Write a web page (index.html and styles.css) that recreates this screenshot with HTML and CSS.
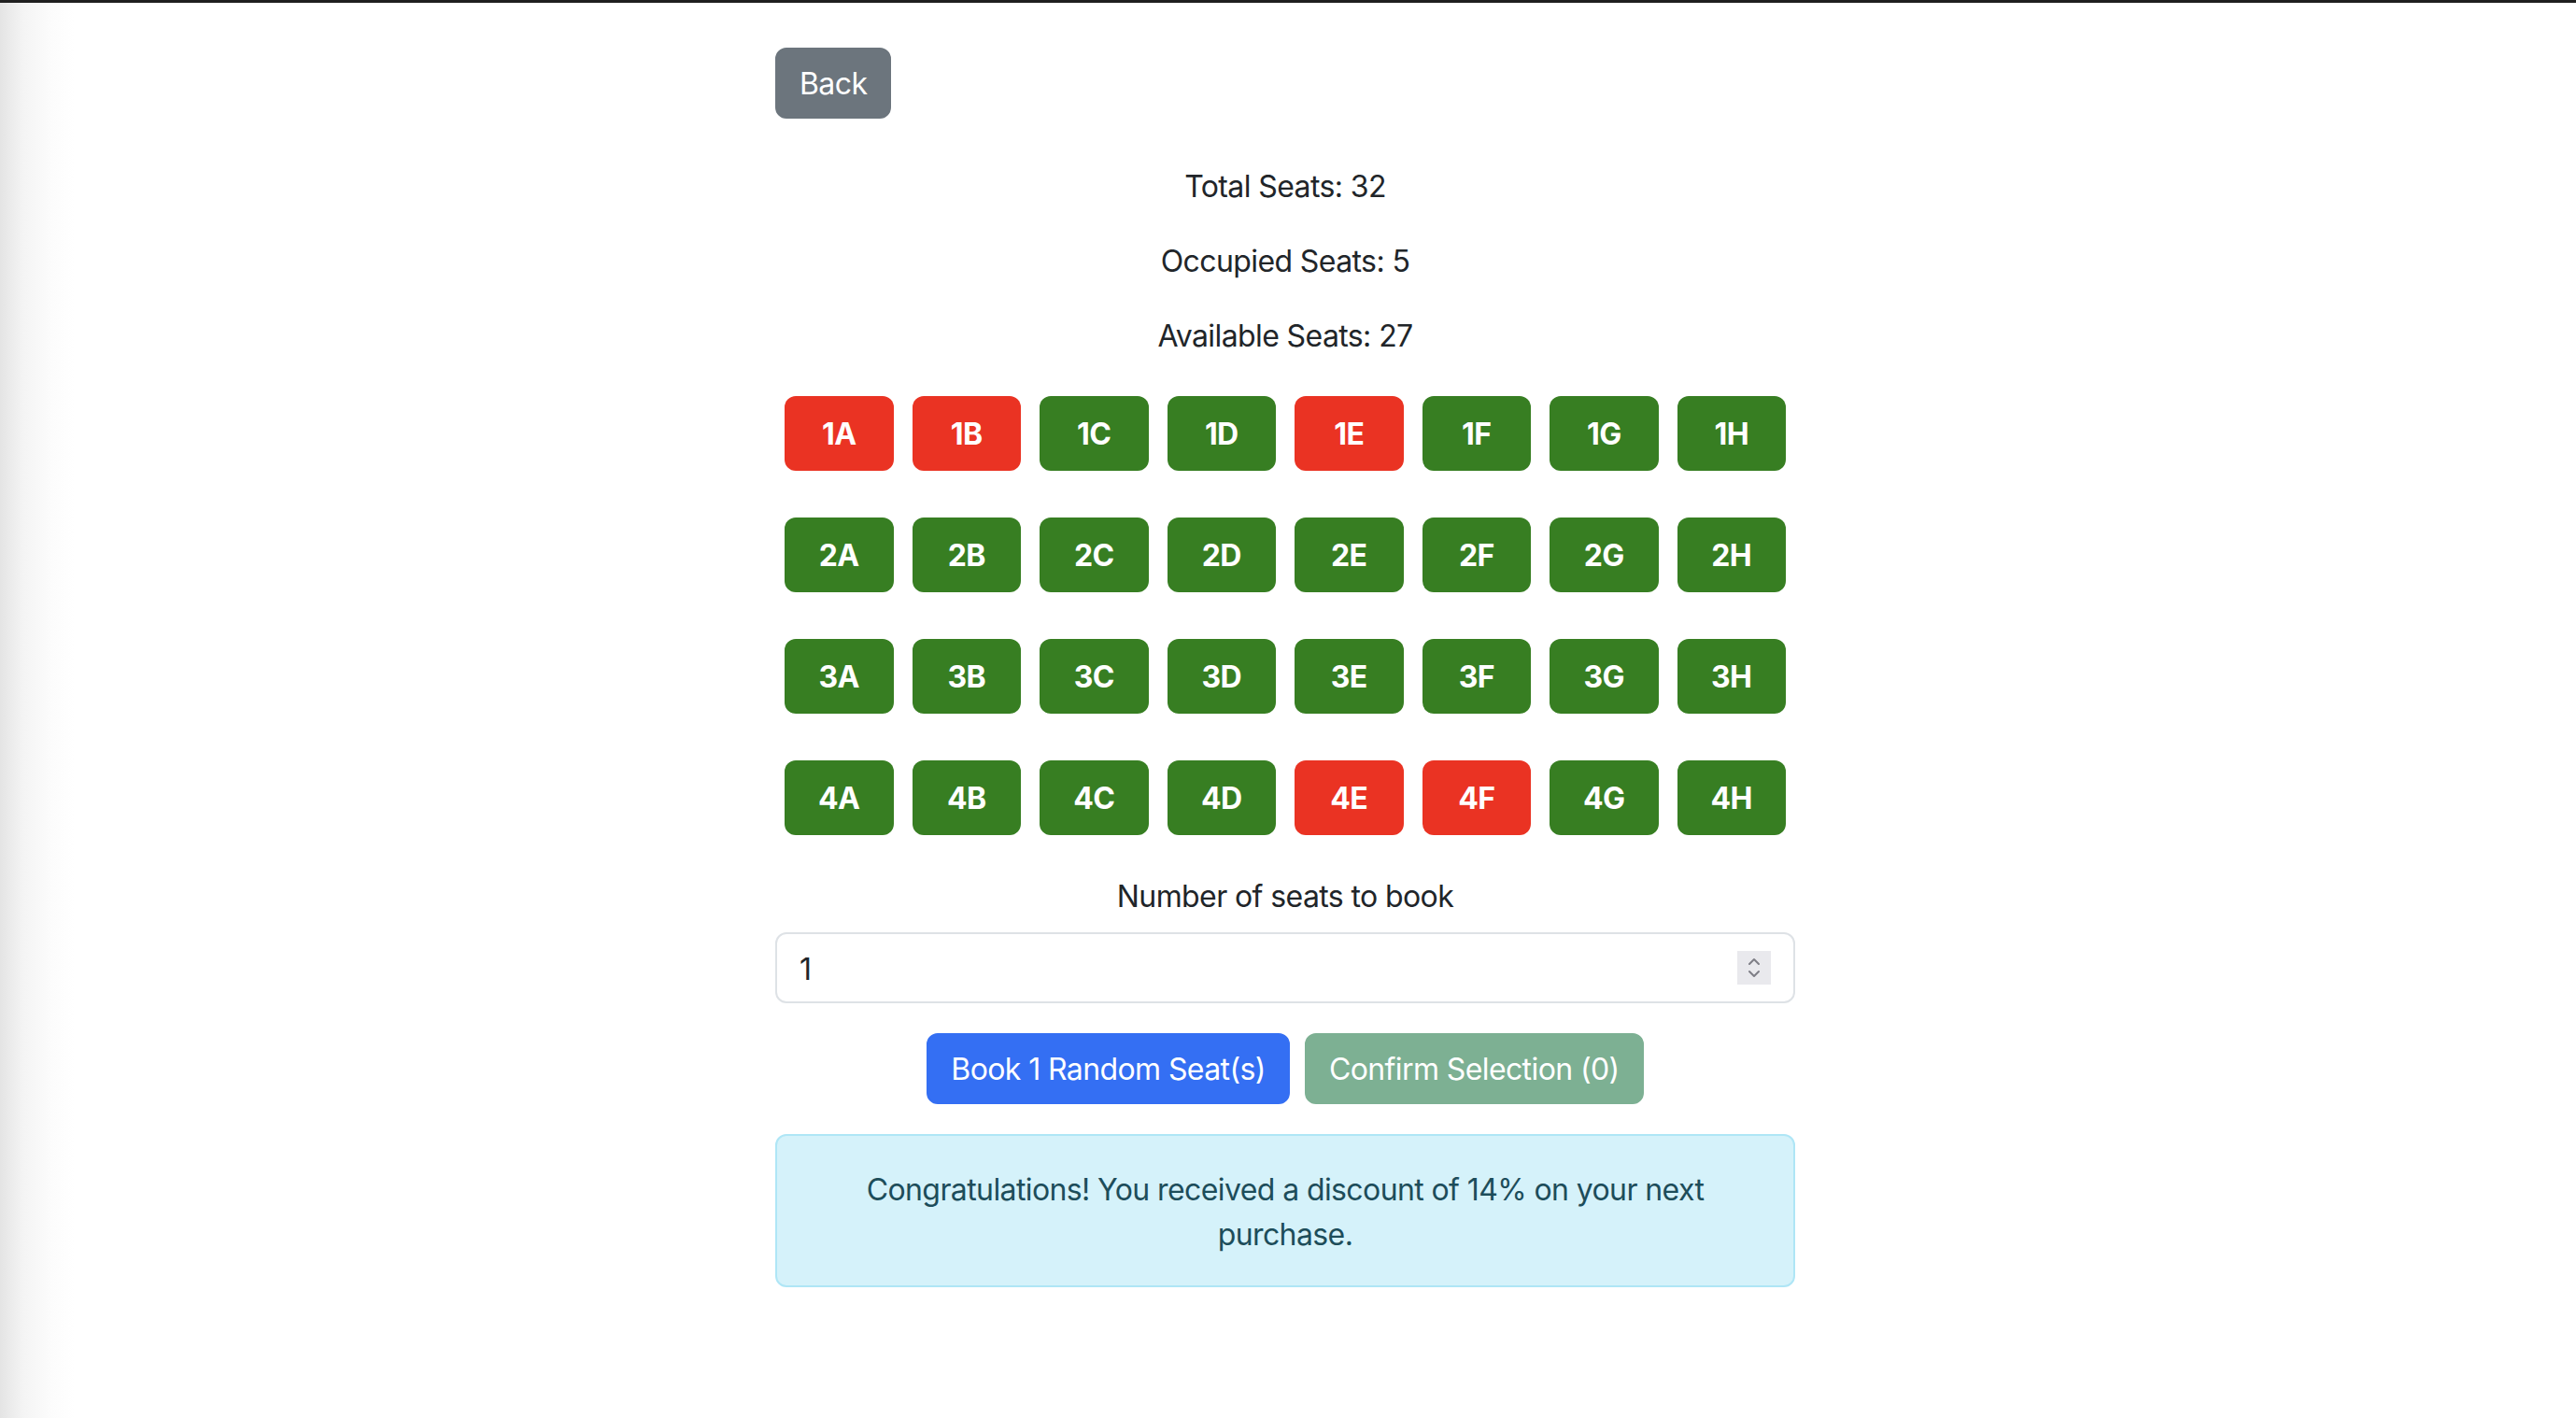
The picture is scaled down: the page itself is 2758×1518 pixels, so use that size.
FILE: index.html
```html
<!DOCTYPE html>
<html lang="en">
<head>
<meta charset="utf-8">
<title>Seat Booking</title>
<link rel="stylesheet" href="styles.css">
</head>
<body>
<div class="topbar"></div>
<main class="page">
  <button class="btn btn-back" type="button">Back</button>
  <section class="stats">
    <p>Total Seats: 32</p>
    <p>Occupied Seats: 5</p>
    <p>Available Seats: 27</p>
  </section>
  <div class="seat-grid">
    <button class="seat occupied">1A</button>
    <button class="seat occupied">1B</button>
    <button class="seat free">1C</button>
    <button class="seat free">1D</button>
    <button class="seat occupied">1E</button>
    <button class="seat free">1F</button>
    <button class="seat free">1G</button>
    <button class="seat free">1H</button>
    <button class="seat free">2A</button>
    <button class="seat free">2B</button>
    <button class="seat free">2C</button>
    <button class="seat free">2D</button>
    <button class="seat free">2E</button>
    <button class="seat free">2F</button>
    <button class="seat free">2G</button>
    <button class="seat free">2H</button>
    <button class="seat free">3A</button>
    <button class="seat free">3B</button>
    <button class="seat free">3C</button>
    <button class="seat free">3D</button>
    <button class="seat free">3E</button>
    <button class="seat free">3F</button>
    <button class="seat free">3G</button>
    <button class="seat free">3H</button>
    <button class="seat free">4A</button>
    <button class="seat free">4B</button>
    <button class="seat free">4C</button>
    <button class="seat free">4D</button>
    <button class="seat occupied">4E</button>
    <button class="seat occupied">4F</button>
    <button class="seat free">4G</button>
    <button class="seat free">4H</button>
  </div>
  <label class="count-label" for="count">Number of seats to book</label>
  <div class="count-field">
    <input id="count" class="count-input" type="text" value="1">
    <span class="spinner" aria-hidden="true">
      <svg width="14" height="24" viewBox="0 0 14 24">
        <path d="M2 8 L7 3 L12 8" fill="none" stroke="#7e7e86" stroke-width="2" stroke-linecap="round" stroke-linejoin="round"/>
        <path d="M2 16 L7 21 L12 16" fill="none" stroke="#7e7e86" stroke-width="2" stroke-linecap="round" stroke-linejoin="round"/>
      </svg>
    </span>
  </div>
  <div class="actions">
    <button class="btn btn-primary" type="button">Book 1 Random Seat(s)</button>
    <button class="btn btn-confirm" type="button" disabled>Confirm Selection (0)</button>
  </div>
  <div class="alert">Congratulations! You received a discount of 14% on your next purchase.</div>
</main>
</body>
</html>
```

FILE: styles.css
```css
* {
  box-sizing: border-box;
}

html, body {
  height: 100%;
}

body {
  margin: 0;
  font-family: Inter, "Liberation Sans", Arial, sans-serif;
  font-size: 32px;
  line-height: 1.5;
  letter-spacing: -0.6px;
  color: #212529;
  background: linear-gradient(to right, #e4e4e4 0, #f4f4f4 25px, #fcfcfc 55px, #ffffff 80px);
}

.topbar {
  height: 3px;
  background: #1f1f1f;
}

.page {
  width: 1092px;
  margin-left: calc(50% - 549px);
  padding-top: 48px;
}

.btn {
  display: inline-flex;
  align-items: center;
  justify-content: center;
  height: 76px;
  padding: 2px 24px 0;
  border: 2px solid transparent;
  border-radius: 12px;
  font-family: inherit;
  font-size: 32px;
  line-height: 1.5;
  letter-spacing: -0.6px;
  color: #ffffff;
  cursor: pointer;
}

.btn-back {
  background: #6c757d;
  border-color: #6c757d;
}

.stats {
  margin-top: 49px;
  text-align: center;
}

.stats p {
  margin: 0 0 32px;
  line-height: 48px;
}

.seat-grid {
  display: grid;
  grid-template-columns: repeat(8, 1fr);
  column-gap: 20px;
  row-gap: 50px;
  padding: 8px 10px 10px;
}

.seat {
  height: 80px;
  padding-top: 2px;
  border: none;
  border-radius: 12px;
  font-family: inherit;
  font-size: 32px;
  font-weight: 700;
  letter-spacing: -0.6px;
  color: #ffffff;
  cursor: pointer;
}

.seat.occupied {
  background: #ea3323;
}

.seat.free {
  background: #377e22;
}

.count-label {
  display: block;
  margin-top: 32px;
  margin-bottom: 14px;
  text-align: center;
  line-height: 48px;
}

.count-field {
  position: relative;
}

.count-input {
  display: block;
  width: 100%;
  height: 76px;
  padding: 2px 24px 0;
  border: 2px solid #dee2e6;
  border-radius: 12px;
  font-family: inherit;
  font-size: 32px;
  color: #212529;
  background: #ffffff;
  outline: none;
}

.spinner {
  position: absolute;
  top: 20px;
  right: 26px;
  width: 36px;
  height: 36px;
  display: flex;
  align-items: center;
  justify-content: center;
  background: #e9e9ed;
}

.actions {
  display: flex;
  justify-content: center;
  gap: 16px;
  margin-top: 32px;
}

.btn-primary {
  background: #346ff3;
  border-color: #346ff3;
}

.btn-confirm {
  background: #7db093;
  border-color: #7db093;
  cursor: default;
}

.alert {
  margin-top: 32px;
  padding: 34px 32px 30px;
  border: 2px solid #afe6f6;
  border-radius: 12px;
  background: #d5f2fa;
  color: #1d4d5a;
  text-align: center;
  line-height: 48px;
}
```
